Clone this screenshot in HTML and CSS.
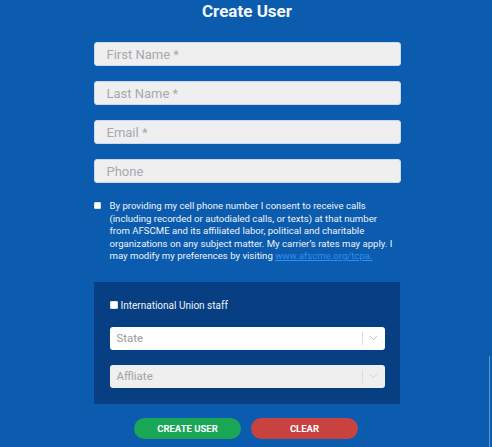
FILE: index.html
```html
<!DOCTYPE html>
<html lang="en">
<head>
    <meta charset="UTF-8">
    <meta name="viewport" content="width=device-width, initial-scale=1.0">
    <title>Create User</title>
    <link rel="stylesheet" href="styles.css">
</head>
<body>
    <div class="page">
        <h1>Create User</h1>

        <form class="user-form">
            <input class="field" type="text" placeholder="First Name *">
            <input class="field" type="text" placeholder="Last Name *">
            <input class="field" type="email" placeholder="Email *">
            <input class="field" type="tel" placeholder="Phone">

            <label class="consent">
                <input class="box" type="checkbox">
                <span>By providing my cell phone number I consent to receive calls (including recorded or autodialed calls, or texts) at that number from AFSCME and its affiliated labor, political and charitable organizations on any subject matter. My carrier’s rates may apply. I may modify my preferences by visiting <a href="#">www.afscme.org/tcpa.</a></span>
            </label>

            <div class="staff-panel">
                <label class="staff">
                    <input class="box" type="checkbox">
                    <span>International Union staff</span>
                </label>

                <div class="select">
                    <span class="select-value">State</span>
                    <span class="select-arrow">
                        <svg width="9" height="6" viewBox="0 0 9 6"><path d="M1 1l3.5 3.5L8 1" fill="none" stroke="#c4c4c4" stroke-width="1"/></svg>
                    </span>
                </div>

                <div class="select disabled">
                    <span class="select-value">Affliate</span>
                    <span class="select-arrow">
                        <svg width="9" height="6" viewBox="0 0 9 6"><path d="M1 1l3.5 3.5L8 1" fill="none" stroke="#d0d0d0" stroke-width="1"/></svg>
                    </span>
                </div>
            </div>

            <div class="actions">
                <button type="button" class="btn btn-create">CREATE USER</button>
                <button type="reset" class="btn btn-clear">CLEAR</button>
            </div>
        </form>
    </div>
    <div class="edge"></div>
</body>
</html>
```

FILE: styles.css
```css
body {
    margin: 0;
    height: 447px;
    overflow: hidden;
    background: #0b5cae;
    font-family: Roboto, "Liberation Sans", Arial, sans-serif;
    color: #fff;
    position: relative;
}
.page {
    width: 307px;
    margin: 0 auto;
    padding-left: 2px;
}
h1 {
    margin: 0;
    font-size: 17px;
    line-height: 22px;
    font-weight: 700;
    text-align: center;
    color: #f4f7fb;
}
.user-form {
    display: flex;
    flex-direction: column;
    margin-top: 20px;
}
.field {
    box-sizing: border-box;
    height: 24px;
    margin-bottom: 15px;
    padding: 0 12px;
    border: 1px solid #c9daee;
    border-radius: 3px;
    background: #efefef;
    font-family: inherit;
    font-size: 13px;
    color: #555;
}
.field::placeholder {
    color: #a6a9b0;
}
.consent {
    display: flex;
    gap: 9px;
    margin-top: 2px;
    font-size: 9.6px;
    line-height: 12.5px;
    color: #eef2f8;
}
.consent span {
    max-width: 287px;
}
.consent a {
    color: #2d8ff0;
}
.box {
    appearance: none;
    flex: none;
    width: 7px;
    height: 7px;
    margin: 2px 0 0;
    background: #fff;
    border: 1px solid #e0e0e0;
    border-radius: 1px;
}
.staff-panel {
    margin-top: 19px;
    padding: 18px 15px 16px 16px;
    background: #073f82;
    width: 306px;
    box-sizing: border-box;
}
.staff {
    display: flex;
    gap: 3px;
    align-items: center;
    font-size: 10px;
    color: #f0f2f6;
}
.staff .box {
    margin: 0;
    width: 8px;
    height: 8px;
}
.select {
    display: flex;
    align-items: center;
    height: 23px;
    margin-top: 16px;
    border-radius: 3px;
    background: #fff;
    font-size: 11.5px;
    color: #9a9a9a;
}
.select + .select {
    margin-top: 15px;
}
.select.disabled {
    background: #efefef;
    color: #a3a3a3;
}
.select-value {
    flex: 1;
    padding-left: 7px;
}
.select-arrow {
    display: flex;
    align-items: center;
    justify-content: center;
    width: 22px;
    height: 13px;
    border-left: 1px solid #dcdcdc;
}
.actions {
    display: flex;
    justify-content: center;
    gap: 10px;
    margin-top: 14px;
    margin-left: -2px;
}
.btn {
    width: 107px;
    height: 21px;
    border: none;
    border-radius: 11px;
    color: #fff;
    font-family: inherit;
    font-size: 9.5px;
    font-weight: 700;
    cursor: pointer;
}
.btn-create {
    background: #19a657;
}
.btn-clear {
    background: #c8433f;
}
.edge {
    position: absolute;
    right: 2px;
    top: 356px;
    bottom: 0;
    width: 1px;
    background: rgba(255, 255, 255, 0.35);
}
```
